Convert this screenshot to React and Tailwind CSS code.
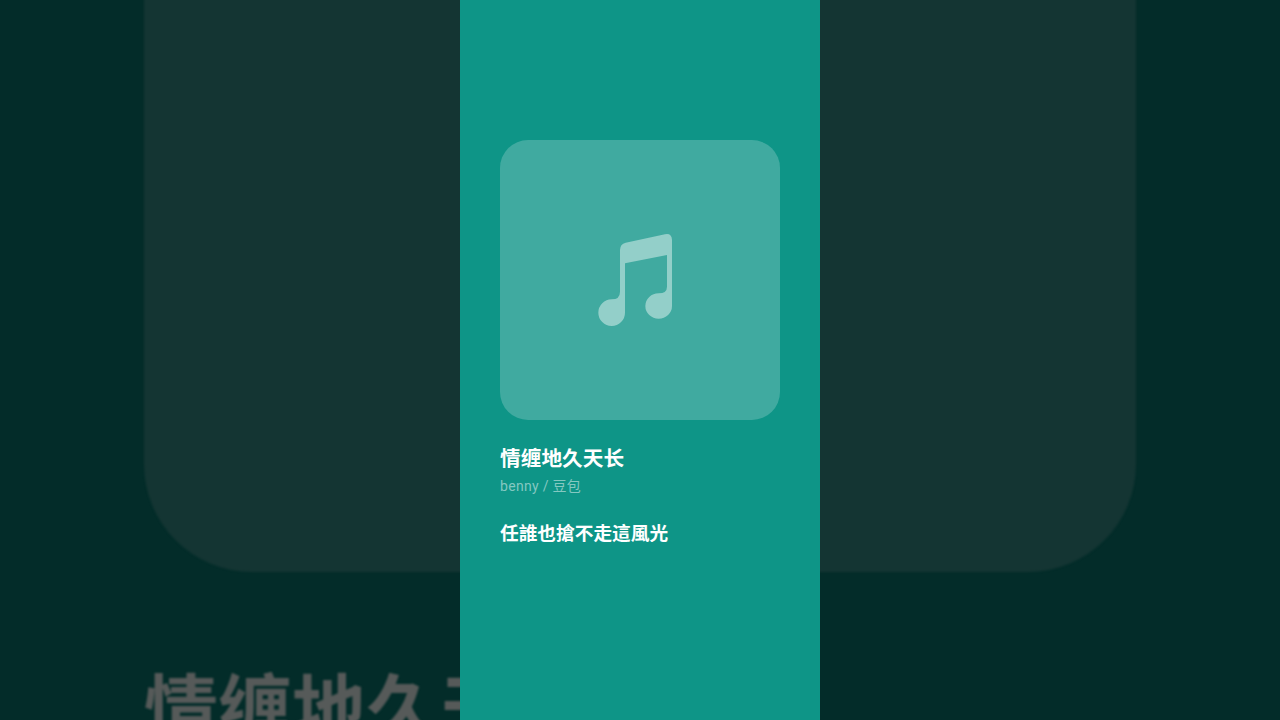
const font = { fontFamily: '"Roboto", "Noto Sans CJK SC", sans-serif' };

const MusicNote = ({ className }) => (
  <svg viewBox="0 0 360 360" className={className} fill="currentColor">
    <path d="M120 90 Q120 72 137 68 L255 43 Q275 39 276 60 L276 258 A40 38 0 1 1 236 220 Q261 220 261 200 L261 105 L135 130 L135 278 A40 40 0 1 1 95 238 Q120 238 120 215 Z" />
  </svg>
);

const App = () => {
  return (
    <div className="relative h-screen overflow-hidden bg-[#032c29]">
      {/* blurred backdrop, the same card scaled up */}
      <div className="absolute inset-0 flex flex-col px-[144px] pt-[420px] mt-[-840px] blur-[1px]">
        <div className="h-[992px] shrink-0 rounded-[108px] bg-[#143533]"></div>
        <div className="mt-[91px] text-[74px] leading-[96px] font-semibold whitespace-nowrap text-[#565a59]" style={font}>
          情缠地久天长
        </div>
      </div>

      {/* player column */}
      <div className="relative mx-auto flex h-screen w-[360px] flex-col bg-[#0e9587] px-10 pt-[140px]">
        <div className="flex h-[280px] w-[280px] items-center justify-center rounded-[28px] bg-[#40aaa0]">
          <MusicNote className="h-[120px] w-[120px] text-[#93cfc9]" />
        </div>
        <div className="mt-6 text-[20.7px] leading-[30px] font-semibold text-white" style={font}>
          情缠地久天长
        </div>
        <div className="mt-[2px] text-[14px] leading-5 tracking-[0.3px] text-[#84c8c1]" style={font}>
          benny / 豆包
        </div>
        <div className="mt-6 text-[18.7px] leading-7 font-semibold text-white" style={font}>
          任誰也搶不走這風光
        </div>
      </div>
    </div>
  );
};

export default App;
